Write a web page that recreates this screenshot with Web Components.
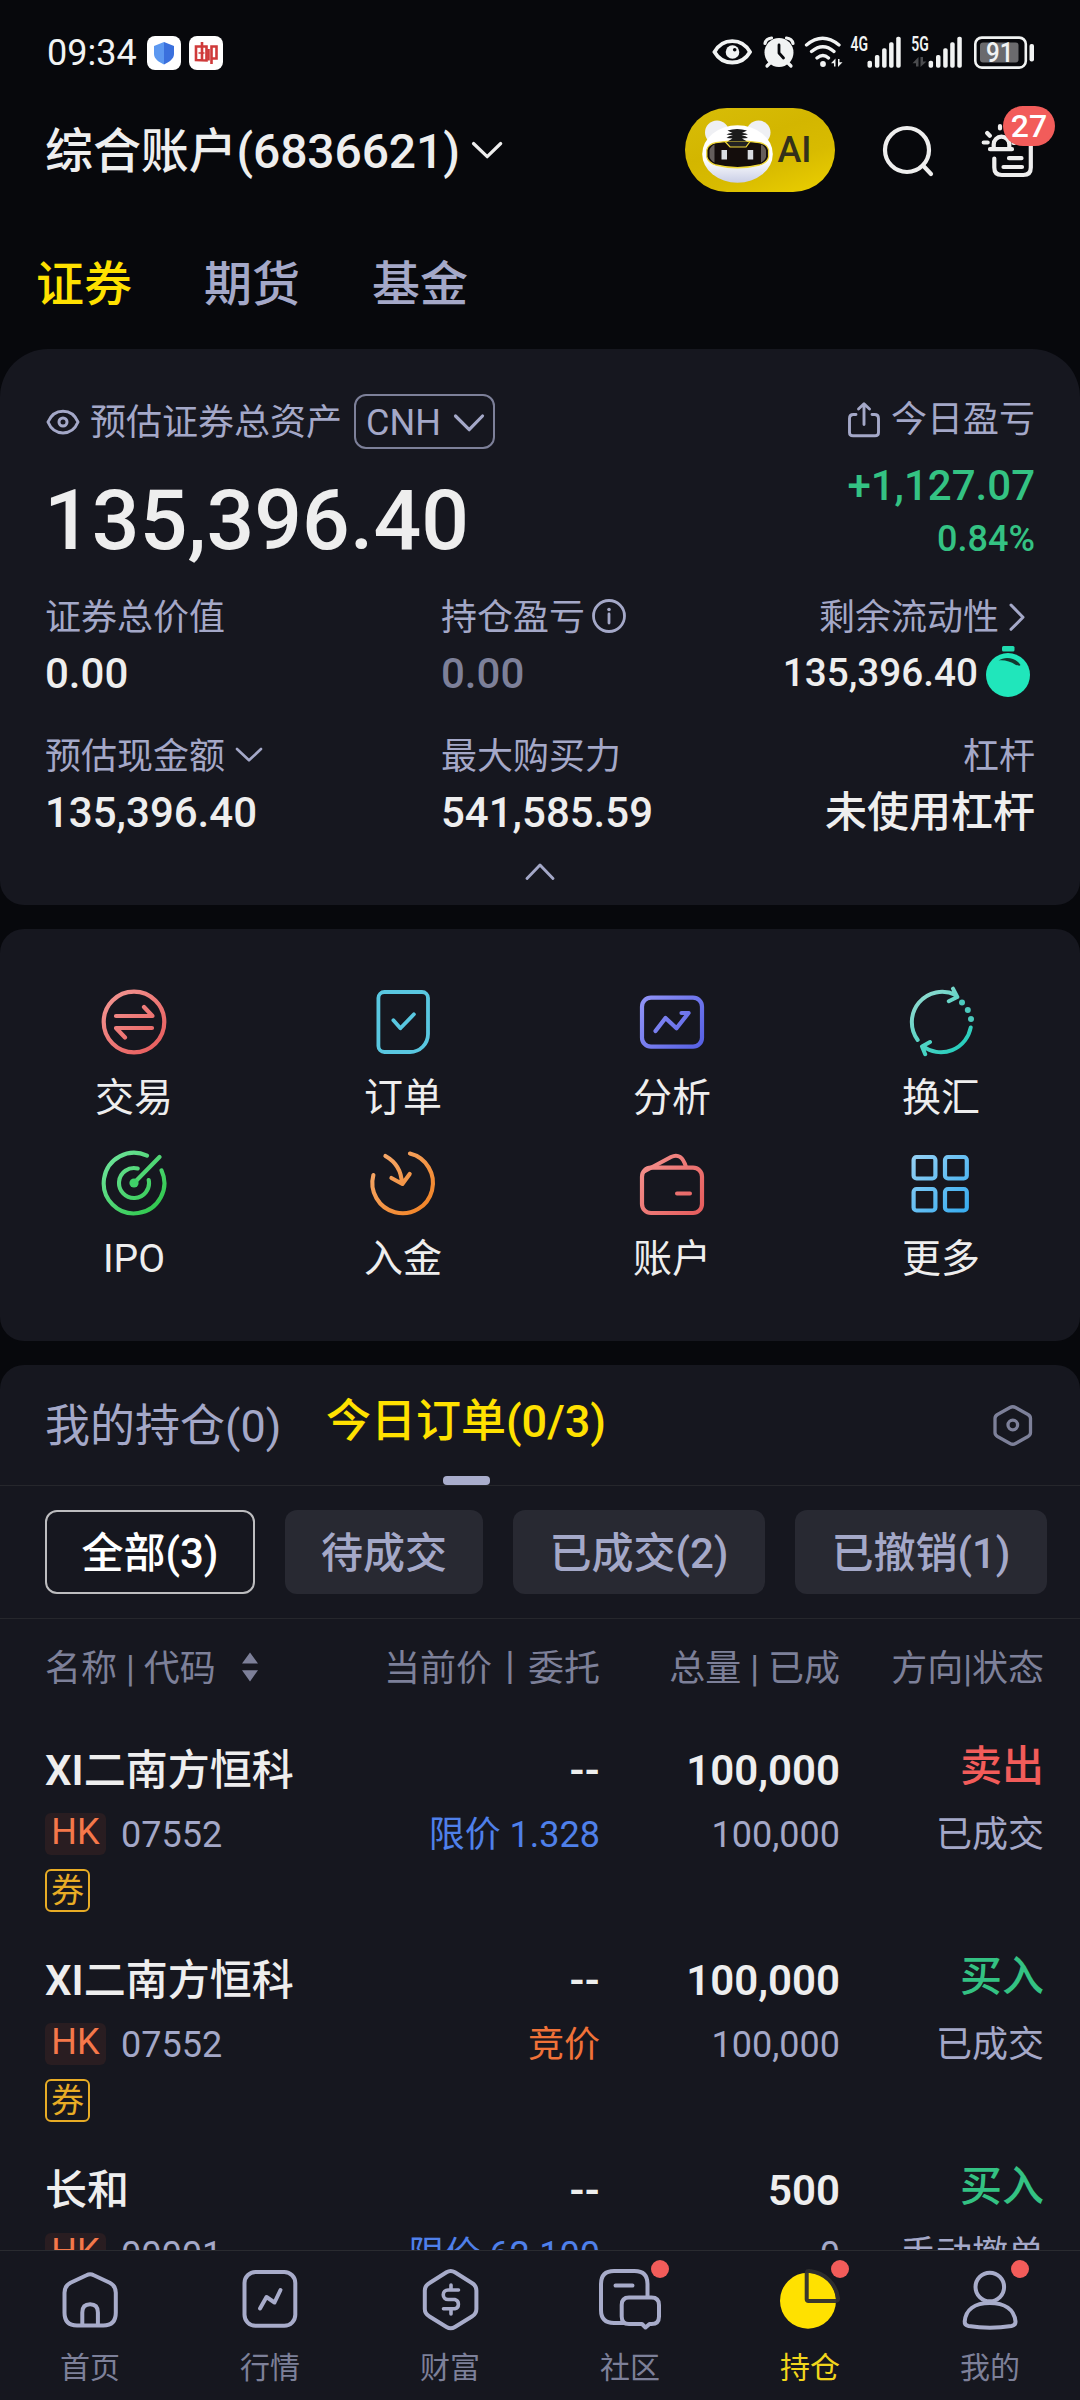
<!DOCTYPE html>
<html lang="zh-CN">
<head>
<meta charset="utf-8">
<title>持仓</title>
<style>
html,body{margin:0;padding:0;background:#07080c}
body{width:1080px;height:2400px;overflow:hidden;font-family:Roboto,"Noto Sans CJK SC",sans-serif;color:#eee;
--card:#16171f;--mut:#a4a8c8;--dim:#7d8099;--yel:#ffe100;--grn:#34c283;--red:#f25c5a;--fg:#eeeeee}
</style>
</head>
<body>
<app-shell>
  <status-bar></status-bar>
  <account-header account="综合账户(6836621)" count="27"></account-header>
  <market-tabs><span class="on">证券</span><span>期货</span><span>基金</span></market-tabs>
  <asset-card></asset-card>
  <quick-grid>
    <quick-item icon="trade">交易</quick-item><quick-item icon="order">订单</quick-item>
    <quick-item icon="chart">分析</quick-item><quick-item icon="fx">换汇</quick-item>
    <quick-item icon="ipo">IPO</quick-item><quick-item icon="deposit">入金</quick-item>
    <quick-item icon="wallet">账户</quick-item><quick-item icon="more">更多</quick-item>
  </quick-grid>
  <order-panel>
    <order-row name="XI二南方恒科" code="07552" price="限价 1.328" kind="limit" total="100,000" done="100,000" side="sell" state="已成交" coupon></order-row>
    <order-row name="XI二南方恒科" code="07552" price="竞价" kind="auction" total="100,000" done="100,000" side="buy" state="已成交" coupon></order-row>
    <order-row name="长和" code="00001" price="限价 62.100" kind="limit" total="500" done="0" side="buy" state="手动撤单"></order-row>
  </order-panel>
  <bottom-nav>
    <nav-item icon="home">首页</nav-item><nav-item icon="quote">行情</nav-item><nav-item icon="wealth">财富</nav-item>
    <nav-item icon="forum" dot>社区</nav-item><nav-item icon="hold" dot active>持仓</nav-item><nav-item icon="me" dot>我的</nav-item>
  </bottom-nav>
</app-shell>
<script>
const grad=(x1,y1,x2,y2,a,b)=>`<defs><linearGradient id="g" gradientUnits="userSpaceOnUse" x1="${x1}" y1="${y1}" x2="${x2}" y2="${y2}"><stop stop-color="${a}"/><stop offset="1" stop-color="${b}"/></linearGradient></defs>`;
const line=(w,d,c='currentColor')=>`<path d="${d}" fill="none" stroke="${c}" stroke-width="${w}" stroke-linecap="round" stroke-linejoin="round"/>`;
const bars=x=>[[0,60.7],[7.4,55],[14.6,48.3],[21.6,42.3],[28.7,36.7]].map(([d,y])=>`<rect x="${x+d}" y="${y}" width="4.5" height="${67.7-y}" rx="1.8" fill="#f1f3f3"/>`).join('');
const small=(t,x,y,s,w,b=600)=>`<text x="${x}" y="${y}" font-size="${s}" font-weight="${b}" fill="#f1f3f3" textLength="${w}" lengthAdjust="spacingAndGlyphs">${t}</text>`;

/* name: [viewBox, markup] */
const ICONS={
shield:['147 36 34 34',`<rect x="147" y="36" width="34" height="34" rx="8" fill="#fff"/><path d="M164 42l10 4v8c0 5-5 8-10 10.500z" fill="#3a70dd"/><path d="M164 42l-10 4v8c0 5 5 8 10 10.500z" fill="#5c98f0"/>`],
post:['189 36 34 34',`<rect x="189" y="36" width="34" height="34" rx="8" fill="#fff"/><g fill="none" stroke="#cf3a3a" stroke-width="2.600"><path d="M202 42v18M196 60V46.500h10.500V60.500z"/><path d="M198.500 53h6" stroke-width="1.500"/><path d="M211.500 64V46.500h5v12h-5M208.500 60.500V49"/></g>`],
sysEye:['712 36 40 32',`<path d="M714.500 52c8-14.500 27.500-14.500 35.500 0c-8 14-27.500 14-35.500 0z" fill="none" stroke="#f1f3f3" stroke-width="3.800"/><circle cx="732.500" cy="52" r="6.800" fill="#f1f3f3"/><circle cx="734.700" cy="49.800" r="1.800" fill="#07080c"/>`],
alarm:['762 35 34 34',`<circle cx="779" cy="52.500" r="14.500" fill="#f1f3f3"/>`+line(3.2,'M765 43.500q1-5 6.500-5.500M793 43.500q-1-5-6.500-5.500M770 63l-3 3M788 63l3 3','#f1f3f3')+line(2.8,'M779 45v8l4.500 5','#07080c')],
wifi:['803 34 40 36',line(3.3,'M806.500 45q16-13.500 32.500 0M811.500 51.500q11.500-9.500 22.500 0M817 58q6-5 11.500 0','#f1f3f3')+`<circle cx="823" cy="64" r="2.900" fill="#f1f3f3"/><path d="M835.500 66.500v-8l-4.500 4.800h3v3.200zM838 59v8l4.500-4.800h-3V59z" fill="#f1f3f3"/>`],
cell:['849 34 54 36',small('4G',850.5,51,19.5,17.5)+bars(867.5)],
cell5:['910 34 54 36',small('5G',911.3,51,19.5,17.5)+`<path d="M918.500 66.500v-9.500l-6 6.300h3.500v3.200zM920.500 57v10l6-5.500h-3.500V57z" fill="#4a4b4e"/>`+bars(928.6)],
battery:['973 34 62 36',`<rect x="975.300" y="37.600" width="50.500" height="30" rx="6.500" fill="none" stroke="#f1f3f3" stroke-width="2.600"/><rect x="980" y="42.500" width="38.500" height="20" rx="3" fill="#6a6a6d"/>${small('91',986,62.3,28,27.5,500)}<rect x="1029.500" y="44" width="4.500" height="17.500" rx="2" fill="#f1f3f3"/>`],
down:['470 139 34 20',line(3.2,'M473.500 142.500l13.700 13.200l13.500-13.200','#eee')],
tiger:['700 117 76 70',`<defs><linearGradient id="h" x1="0" y1="0" x2="0" y2="1"><stop offset=".6" stop-color="#fff"/><stop offset="1" stop-color="#c9cee6"/></linearGradient></defs><circle cx="717" cy="132.500" r="12" fill="#eff0f4"/><circle cx="758.500" cy="132.500" r="12" fill="#eff0f4"/><ellipse cx="737.500" cy="154" rx="35.300" ry="28.800" fill="url(#h)"/><path d="M706.800 150c1-4 5-6.500 9-7.300q22-3.800 43.500 0c5 .8 8.300 3.500 9.300 7.300v7c-1 4-4.500 6.500-9.300 8q-21.700 5.500-43.500 0c-5-1.500-8-4-9-8z" fill="#140d0c" stroke="#f0d838" stroke-width="1.300"/><path d="M709.500 150v7c1 3 3 4.500 5 5.500v-18c-2 .8-4 2.500-5 5.500zM766 150v7c-1 3-3 4.500-5 5.500v-18c2 .8 4 2.500 5 5.500z" fill="#8f8886" opacity=".65"/><path d="M725 141.500h25l-4 5.500h-16z" fill="#222" stroke="#f0d838" stroke-width="1.200"/><path d="M727.500 130.500q9.500-3 19.500 0l-5 2.500q4-.2 6 1.500l-6.500 1q4.500.2 6.500 2.500l-6 .5l5 3h-19.500l5-3l-6-.5q2-2.300 6.500-2.500l-6.500-1q2-1.700 6-1.500z" fill="#1b1b1b"/><rect x="721.500" y="150" width="5.500" height="9.500" fill="#d9dbe0"/><rect x="747.700" y="150" width="5.500" height="9.500" fill="#d9dbe0"/>`],
search:['880 123 56 56',`<circle cx="907" cy="150" r="22" fill="none" stroke="#eee" stroke-width="4.200"/>`+line(4.2,'M923 165.500l8 8.500','#eee')],
report:['978 118 60 62',line(4.2,'M983.700 142.500h4M987.200 133l2.600 2.800M1000 126v2.500M990 149.200h22M993.700 148v-3.500a7.800 7.800 0 0 1 15.600 0v3.500M1013.500 143h1M994.300 158.500v9q0 7.500 7.500 7.500h21.500q7.500 0 7.500-7.500V144M1009 158.200h12.500M1003.500 167h18.500','#eee')],
eye:['45 403 36 36',line(3,'M48 421c6-14.500 24-14.500 30 0c-6 14.500-24 14.500-30 0z')+`<circle cx="63" cy="421" r="4" fill="none" stroke="currentColor" stroke-width="3"/>`],
ccy:['450 409 36 24',line(3.2,'M454.500 414l13.700 13.700l13.300-13.700')],
share:['846 398 36 40',line(2.9,'M856 412.500h-2.500q-4 0-4 4v14q0 3.300 3.500 3.300h22q3.500 0 3.500-3.300v-14q0-4-4-4H872M864 422.500v-20M858.500 407l5.500-5.200l5.500 5.200')],
info:['590 596 38 38',`<circle cx="609" cy="615" r="15.500" fill="none" stroke="currentColor" stroke-width="2.800"/>`+line(2.8,'M609 613v9')+`<circle cx="609" cy="608.500" r="1.800" fill="currentColor"/>`],
right:['1006 600 22 31',line(3,'M1011 603l12 12.300l-12 12')],
watch:['984 644 48 55',`<rect x="1002" y="646" width="12.500" height="5.500" rx="1.500" fill="#20dcb0"/><circle cx="1008" cy="675" r="22" fill="#20e6bb"/><path d="M998.500 660.500c7-5 18-2.500 22 4.500c-1 1.500-3 .2-5-.3c-5-3-11-5-17-4.200z" fill="#12382f"/>`],
cash:['233 744 32 20',line(2.6,'M237 749l12 11.300l12-11.300')],
up:['523 861 34 23',line(2.9,'M527 879.500l13-13.500l13 13.500')],
trade:['98 986 72 72',grad(110,995,158,1050,'#f29490','#e85d5d')+`<circle cx="134" cy="1022" r="30.300" fill="none" stroke="url(#g)" stroke-width="4.200"/>`+line(4.2,'M116 1016h36.500l-8.500-9M152 1028h-36l9 9.500','url(#g)')],
order:['367.600 986 72 72',line(3.8,'M385 992H422.600a6 6 0 0 1 6 6V1034a18 18 0 0 1-18 18H385a6 6 0 0 1-6-6V998a6 6 0 0 1 6-6ZM394 1020.300l7 8l13.500-14','#59c7e0')],
chart:['636 986 72 72',grad(642,998,702,1046,'#9093f6','#5660e4')+`<rect x="642" y="997.700" width="60" height="49" rx="9" fill="none" stroke="url(#g)" stroke-width="4.200"/>`+line(4.2,'M655.500 1031l10-13l11 10.300l12-15.300h-7','url(#g)')],
fx:['905 986 72 72',grad(918,995,965,1050,'#90dacf','#20cdbb')+line(4,'M917.700 1040a30.300 30.300 0 0 1 38-45M957.300 997l-4.300-8.300M957.300 997l-8.500 4.200M970.700 1027.500a30.300 30.300 0 0 1-47.500 19M922 1046.500l8-4.500M922 1046.500l3.200 7.700','url(#g)')+`<g fill="#4cc9bd"><circle cx="962" cy="1002.500" r="3"/><circle cx="967.800" cy="1010" r="3"/><circle cx="971" cy="1019" r="3"/></g>`],
ipo:['98 1147 72 72',grad(110,1160,158,1210,'#6ae296','#30c84d')+line(4.1,'M147 1155.700a30.300 30.300 0 1 0 14.500 14.600M137.700 1168.500a15 15 0 1 0 11 11.500M135 1182l24.500-25','url(#g)')+`<circle cx="134" cy="1183" r="4.600" fill="#3fd068"/>`],
deposit:['367.600 1147 72 72',grad(380,1160,428,1210,'#f5a768','#f28426')+line(4.1,'M410.500 1153.500a30.300 30.300 0 1 1-36.500 21.500M386 1156q16 9 16.500 27.500M392 1178l11 6l7.300-10','url(#g)')],
wallet:['636 1147 72 72',grad(645,1165,702,1213,'#f38d89','#e55c5c')+`<rect x="642" y="1167.700" width="60" height="45.300" rx="9" fill="none" stroke="url(#g)" stroke-width="4.200"/>`+line(4,'M677 1193.500h13M644 1171.500l27-14.500c7-3.500 12 0 15 10','url(#g)')],
more:['905 1147 72 72',grad(913,1157,967,1211,'#93d0f4','#38adf0')+[[913.6,1157],[945,1157],[913.6,1189],[945,1189]].map(([x,y])=>`<rect x="${x}" y="${y}" width="21.800" height="21.500" rx="3" fill="none" stroke="url(#g)" stroke-width="4.200"/>`).join('')],
hex:['991 1402 44 46',line(3.3,'M1010 1407.500q2.800-1.500 5.500 0l12.500 7q2.500 1.500 2.500 4v14q0 2.500-2.500 4l-12.500 7q-2.700 1.500-5.500 0l-12.500-7q-2.500-1.500-2.500-4v-14q0-2.500 2.500-4z')+`<circle cx="1012.800" cy="1425" r="4.800" fill="none" stroke="currentColor" stroke-width="3.300"/>`],
sort:['240 1650 18 32',`<path d="M249 1651.500l8 11h-16zM249 1680.500l8-11.300h-16z" fill="currentColor"/>`],
home:['54 2260 72 72',line(4,'M86.500 2275.300q3.700-2 7.300 0l16 7.500q6 3.200 6 10v20q0 12.700-12.500 12.700H77q-12.500 0-12.500-12.700v-20q0-6.800 6-10zM82.300 2325v-12.500q0-8.300 7.800-8.300t7.800 8.300V2325')],
quote:['234 2260 72 72',`<rect x="244.500" y="2272" width="50.800" height="53.800" rx="11" fill="none" stroke="currentColor" stroke-width="4"/>`+line(4,'M260 2308.500l6.500-11.500l8 5.500l6-12.500')],
wealth:['414 2260 72 72',line(4,'M446.500 2272.300q4.200-2.500 8.400 0l17 10.700q4.500 2.700 4.500 7.500v18.500q0 4.800-4.500 7.500l-17 10.500q-4.200 2.500-8.400 0l-17-10.500q-4.700-2.700-4.700-7.500V2290.500q0-4.800 4.700-7.500z')+line(3.6,'M458.500 2290H448a4.700 4.700 0 0 0 0 9.500H454.800a4.800 4.800 0 0 1 0 9.300H443.500M451 2285v4M451 2310v4')],
forum:['594 2260 72 72',line(4,'M647.500 2297v-13q0-13-13-13H614q-13 0-13 13v26q0 13 13 13h10M615.500 2285.500h17M629 2297.500h22.500q7.500 0 7.500 7.500v11.500q0 7.500-7.500 7.500h-2l-4 3.500l-3.500-3.500H629q-7.300 0-7.300-7.500V2305q0-7.500 7.300-7.500z')],
hold:['774 2260 72 72',`<circle cx="808" cy="2300.700" r="28" fill="#ffe100"/>`+line(4,'M806.700 2299.500V2273q0-2.500 3-2c15 2 26 12 28.300 27q.3 3-2.500 3H808.700q-2 0-2-1.700z','rgba(46,46,47,.95)')],
me:['954 2260 72 72',`<circle cx="989.800" cy="2287" r="14.300" fill="none" stroke="currentColor" stroke-width="4"/>`+line(4,'M964.700 2321.500c1-12 10-18.500 25-18.500s24.500 6.500 25.800 18.500c.2 3-1.300 4-4 4.500c-13 2-30 2-43 0c-2.700-.5-4-1.500-3.800-4.500z')]
};

function el(tag,css,html){
  customElements.define(tag,class extends HTMLElement{
    connectedCallback(){
      if(this.shadowRoot)return;
      const r=this.attachShadow({mode:'open'});
      r.innerHTML=`<style>:host{display:block;box-sizing:border-box}*{box-sizing:border-box}${css}</style>`+(typeof html==='function'?html(this):html);
    }
  });
}
const ic=(n,s='')=>`<ui-icon name="${n}"${s?` style="${s}"`:''}></ui-icon>`;

el('ui-icon',':host{display:block;flex:none}svg{display:block}',h=>{
  const [vb,b]=ICONS[h.getAttribute('name')];const p=vb.split(' ');
  return `<svg width="${p[2]}" height="${p[3]}" viewBox="${vb}" font-family="Roboto,sans-serif">${b}</svg>`;
});
el('app-shell',':host{display:flex;flex-direction:column;height:2400px;width:1080px;overflow:hidden}','<slot></slot>');
el('status-bar',`:host{display:flex;align-items:center;height:104px;padding:0 45px 0 47px;flex:none}
.t{font-size:36px;line-height:44px;color:#f1f3f3;width:91px;padding-top:2px;white-space:nowrap}.l{display:flex;gap:8px;margin:2px 0 0 9px}.r{display:flex;align-items:center;margin-left:auto}`,
`<span class="t">09:34</span><div class="l">${ic('shield')}${ic('post')}</div><div class="r">${ic('sysEye','margin-right:10px')}${ic('alarm','margin-right:7px')}${ic('wifi','margin-right:6px')}${ic('cell','margin-right:7px')}${ic('cell5','margin-right:9px')}${ic('battery')}</div>`);
el('account-header',`:host{display:flex;align-items:center;height:92px;padding:0 42px 0 45px;flex:none}
.n{font-size:48px;font-weight:500;line-height:60px;white-space:nowrap;padding-top:3px;letter-spacing:-.12px}
.ai{display:flex;align-items:center;width:150px;height:84px;border-radius:42px;margin:0 45px 0 auto;padding-left:15px;background:linear-gradient(160deg,#d8bd08 0%,#d3b600 40%,#d8bb00 65%,#ecd000 100%)}
.ai b{font-size:36px;font-weight:500;line-height:42px;color:#33311a;margin-left:1.500px}
.rp{position:relative;margin:-2px 0 0 42px}.bd{position:absolute;left:25px;top:-12px;width:52px;height:40px;border-radius:20px;background:#f25c5a;color:#fff;font-size:32px;font-weight:500;line-height:41px;text-align:center}`,
h=>`<span class="n">${h.getAttribute('account')}</span>${ic('down','margin-left:10px')}<div class="ai">${ic('tiger','margin-top:4px')}<b>AI</b></div>${ic('search','margin-top:2px')}<div class="rp">${ic('report')}<span class="bd">${h.getAttribute('count')}</span></div>`);
el('market-tabs',`:host{display:flex;gap:72px;height:153px;padding:59px 0 0 36px;font-size:48px;line-height:60px;font-weight:500;color:var(--mut);flex:none}::slotted(.on){color:var(--yel)}`,'<slot></slot>');
el('asset-card',`:host{height:556px;padding:45px 45px 0;background:var(--card);border-radius:48px 48px 24px 24px;flex:none;color:var(--fg)}
.top{display:flex;justify-content:space-between;height:169px}
.lb,.l{display:flex;align-items:center;color:var(--mut);font-size:36px;white-space:nowrap}
.lb{height:55px}.lb span{margin:0 12px 0 9px;line-height:44px;padding-top:2px}
.c{display:flex;align-items:center;width:141px;height:55px;border:2px solid var(--dim);border-radius:12px;padding:2px 0 0 10px;line-height:44px}
.big{font-size:84px;font-weight:500;line-height:84px;margin:30px 0 0 -1px;letter-spacing:.1px}
.r{text-align:right;color:var(--grn);font-weight:500}.r .l{font-weight:400;height:50px;justify-content:flex-end;line-height:50px;margin-top:1px}
.p{font-size:42px;line-height:50px;margin-top:16px}.q{font-size:36px;line-height:44px;margin-top:6px}
.g{display:grid;grid-template-columns:396px 300px 1fr;margin-top:33px;row-gap:36px}
.l{height:44px;line-height:44px}.v{display:flex;align-items:center;font-size:42px;font-weight:500;line-height:50px;height:50px;margin-top:9px;white-space:nowrap}
.e .l,.e .v{justify-content:flex-end}.dim{color:var(--dim)}.s{font-size:38.700px;margin:-2px 6px 0 0}.f{display:flex;justify-content:center;margin-top:22px;color:var(--mut)}`,
`<div class="top"><div><div class="lb">${ic('eye')}<span>预估证券总资产</span><div class="c">CNH${ic('ccy','margin-left:10px')}</div></div><div class="big">135,396.40</div></div>
<div class="r"><div class="l">${ic('share','margin-right:9px')}今日盈亏</div><div class="p">+1,127.07</div><div class="q">0.84%</div></div></div>
<div class="g"><div><div class="l">证券总价值</div><div class="v">0.00</div></div>
<div><div class="l">持仓盈亏${ic('info','margin:-4px 0 0 5px')}</div><div class="v dim">0.00</div></div>
<div class="e"><div class="l">剩余流动性${ic('right','margin:-2px 7px 0 7px')}</div><div class="v"><span class="s">135,396.40</span>${ic('watch','margin:-5px 3px 0 0')}</div></div>
<div><div class="l">预估现金额${ic('cash','margin:-6px 0 0 8px')}</div><div class="v">135,396.40</div></div>
<div><div class="l">最大购买力</div><div class="v">541,585.59</div></div>
<div class="e"><div class="l">杠杆</div><div class="v">未使用杠杆</div></div></div><div class="f">${ic('up')}</div>`);
el('quick-grid',':host{display:grid;grid-template-columns:repeat(4,269px);align-content:start;height:412px;margin-top:24px;padding-top:57px;background:var(--card);border-radius:24px;flex:none}','<slot></slot>');
el('quick-item',':host{display:flex;flex-direction:column;align-items:center;height:161px;color:var(--fg);font-size:39px;line-height:46px}span{margin:17px 1px 0 0}ui-icon{margin-right:1px}',h=>`${ic(h.getAttribute('icon'))}<span><slot></slot></span>`);
el('order-panel',`:host{margin-top:24px;background:var(--card);border-radius:24px 24px 0 0;flex:1;min-height:0;overflow:hidden}
.t{display:flex;height:121px;border-bottom:1px solid #26272c;padding:0 45px;font-size:45px;color:var(--mut);white-space:nowrap}
.a{line-height:60px;padding-top:32px;width:281px}.b{display:flex;flex-direction:column;align-items:center;color:var(--yel);font-weight:500;line-height:60px;padding-top:27px;height:120px}
.b i{width:47px;height:9px;border-radius:4px;background:#a9adcc;margin-top:auto}.t ui-icon{margin:37px 0 0 auto;color:var(--dim)}
.ch{display:flex;gap:30px;padding:24px 33px 24px 45px;height:133px;border-bottom:1px solid #26272c;font-size:42px;font-weight:500;line-height:87px;color:var(--mut);text-align:center}
.ch span{height:84px;border-radius:12px;background:#282932;white-space:nowrap}.ch .on{background:none;border:2px solid #bdbdbf;color:#fff;line-height:83px}
.h{display:grid;grid-template-columns:255px 300px 240px 204px;padding-left:45px;font-size:36px;line-height:100px;height:100px;color:var(--dim);text-align:right;white-space:nowrap}
.h div{display:flex;align-items:center;text-align:left}`,
`<div class="t"><div class="a">我的持仓(0)</div><div class="b"><span>今日订单(0/3)</span><i></i></div>${ic('hex')}</div>
<div class="ch"><span class="on" style="width:210px">全部(3)</span><span style="width:198px">待成交</span><span style="width:252px">已成交(2)</span><span style="width:252px">已撤销(1)</span></div>
<div class="h"><div>名称 | 代码${ic('sort','margin:-5px 0 0 25px')}</div><span>当前价丨委托</span><span>总量 | 已成</span><span>方向|状态</span></div><slot></slot>`);
el('order-row',`:host{display:grid;grid-template-columns:255px 300px 240px 204px;height:210px;padding:27px 0 0 45px;text-align:right;font-size:36px;line-height:42px;color:var(--mut);white-space:nowrap}
.n{font-size:42px;font-weight:600;line-height:50px;color:var(--fg);margin-bottom:18px}.k{text-align:left}.k .n{margin-bottom:16px;font-weight:500}.k b{font-weight:600}
.c{display:flex;align-items:center}.hk{width:61px;height:42px;border-radius:6px;background:#291d21;color:#f5784a;text-align:center;line-height:39px}.c span{margin:3px 0 0 15px;line-height:42px}
.c{height:43px}.q{width:45px;height:43px;border:2px solid #e8ac25;border-radius:6px;color:#e8ac25;font-size:33px;line-height:40px;text-align:center;margin-top:14px}
.limit{color:#4f80ea}.auction{color:#f07238}.s{line-height:41px;margin-bottom:27px;font-weight:500}.sell{color:var(--red)}.buy{color:var(--grn)}`,
h=>{const a=n=>h.getAttribute(n);return `<div class="k"><div class="n">${a('name').replace(/^[A-Z]+/,'<b>$&</b>')}</div><div class="c"><div class="hk">HK</div><span>${a('code')}</span></div>${h.hasAttribute('coupon')?'<div class="q">券</div>':''}</div>
<div><div class="n">--</div><div class="${a('kind')}">${a('price')}</div></div><div><div class="n">${a('total')}</div><div>${a('done')}</div></div>
<div><div class="n s ${a('side')}">${a('side')==='buy'?'买入':'卖出'}</div><div>${a('state')}</div></div>`});
el('bottom-nav',':host{display:flex;height:150px;border-top:1px solid #2a2b30;background:var(--card);flex:none}','<slot></slot>');
el('nav-item',`:host{display:flex;flex-direction:column;align-items:center;width:180px;padding-top:9px;font-size:30px;line-height:40px;color:var(--dim)}
:host([active]){color:#f2d61c}.i{position:relative;color:#a8acca}.i i{position:absolute;left:57px;top:0;width:18px;height:18px;border-radius:50%;background:#f25c5a}span{margin-top:16px}`,
h=>`<div class="i">${ic(h.getAttribute('icon'))}${h.hasAttribute('dot')?'<i></i>':''}</div><span><slot></slot></span>`);
</script>
</body>
</html>
